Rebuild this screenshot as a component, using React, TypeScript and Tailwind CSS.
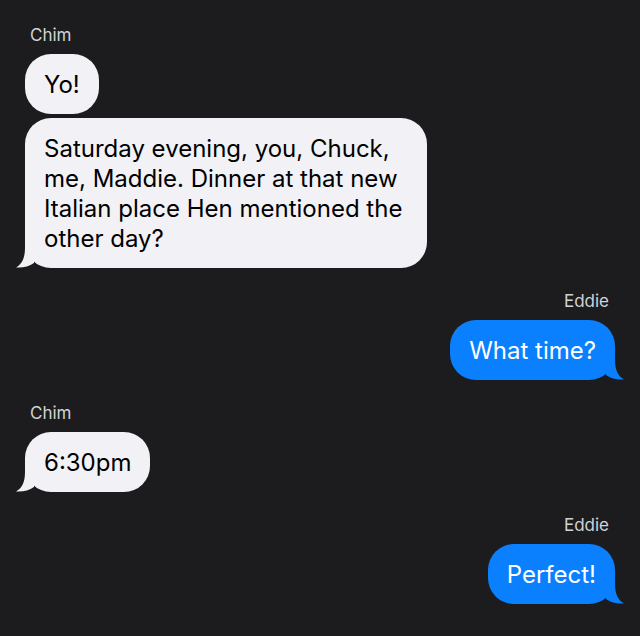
type Side = 'left' | 'right';

type Message = { text: string; tail?: boolean };

type Group = { sender: string; side: Side; messages: Message[] };

const groups: Group[] = [
  {
    sender: 'Chim',
    side: 'left',
    messages: [
      { text: 'Yo!' },
      {
        text: 'Saturday evening, you, Chuck, me, Maddie. Dinner at that new Italian place Hen mentioned the other day?',
        tail: true,
      },
    ],
  },
  { sender: 'Eddie', side: 'right', messages: [{ text: 'What time?', tail: true }] },
  { sender: 'Chim', side: 'left', messages: [{ text: '6:30pm', tail: true }] },
  { sender: 'Eddie', side: 'right', messages: [{ text: 'Perfect!', tail: true }] },
];

function Tail({ side, color }: { side: Side; color: string }) {
  return (
    <svg
      width="26"
      height="28"
      viewBox="0 0 26 28"
      className={
        side === 'left'
          ? 'absolute bottom-0 left-[-9px]'
          : 'absolute bottom-0 right-[-9px] -scale-x-100'
      }
      aria-hidden
    >
      <path d="M9 0 L9 8 C9 18 6 24 0 27.5 C7 28 13 26.5 18 23 L18 0 Z" fill={color} />
    </svg>
  );
}

function Bubble({ side, message }: { side: Side; message: Message }) {
  const isLeft = side === 'left';
  const color = isLeft ? '#f1f1f6' : '#0a80ff';
  return (
    <div
      className={`relative max-w-[402px] rounded-[26px] px-[19px] pt-[16px] pb-[14px] text-[24px] leading-[30px] ${
        isLeft ? 'self-start bg-[#f1f1f6] text-black' : 'self-end bg-[#0a80ff] text-white'
      }`}
    >
      {message.tail && <Tail side={side} color={color} />}
      <span className="relative">{message.text}</span>
    </div>
  );
}

export default function App() {
  return (
    <div className="min-h-screen bg-[#1c1c1e] px-[25px] pt-[26px] font-['Inter',sans-serif] flex flex-col gap-[24px]">
      {groups.map((g, i) => (
        <div key={i} className="flex flex-col">
          <div
            className={`mb-[10px] text-[17px] leading-[18px] text-[#d2d2d7] ${
              g.side === 'left' ? 'ml-[5px] self-start' : 'mr-[6px] self-end'
            }`}
          >
            {g.sender}
          </div>
          <div className="flex flex-col gap-[4px]">
            {g.messages.map((m, j) => (
              <Bubble key={j} side={g.side} message={m} />
            ))}
          </div>
        </div>
      ))}
    </div>
  );
}
